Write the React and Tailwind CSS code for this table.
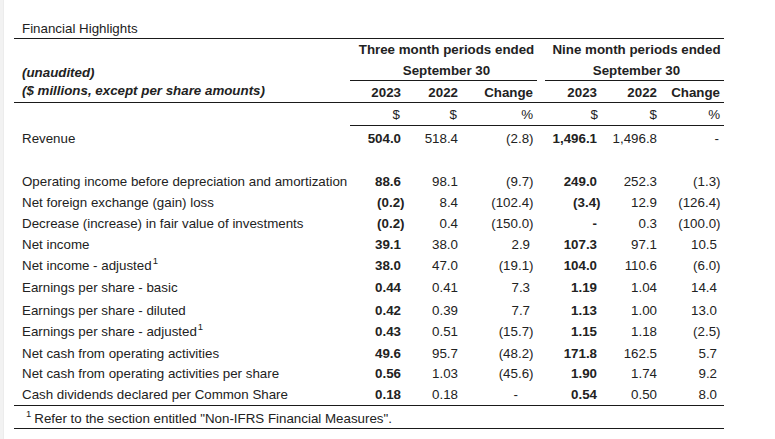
import React from "react";

const COLS = "grid grid-cols-[336px_55px_57px_75px_8px_56px_60px_63px]";
const POS_PR = ["pr-[4px]", "pr-[4px]", "pr-[7px]", "pr-[4px]", "pr-[4px]", "pr-[7px]"];
const NEG_PR = ["pr-[0.5px]", "pr-[0.5px]", "pr-[3.5px]", "pr-[0.5px]", "pr-[0.5px]", "pr-[3.5px]"];
const DASH_PR = ["pr-[5px]", "pr-[5px]", "pr-[19px]", "pr-[4px]", "pr-[5px]", "pr-[5px]"];

const rows = [
  { label: "Operating income before depreciation and amortization", v: ["88.6", "98.1", "(9.7)", "249.0", "252.3", "(1.3)"], h: "h-[21px]" },
  { label: "Net foreign exchange (gain) loss", v: ["(0.2)", "8.4", "(102.4)", "(3.4)", "12.9", "(126.4)"], h: "h-[21px]" },
  { label: "Decrease (increase) in fair value of investments", v: ["(0.2)", "0.4", "(150.0)", "-", "0.3", "(100.0)"], h: "h-[21px]" },
  { label: "Net income", v: ["39.1", "38.0", "2.9", "107.3", "97.1", "10.5"], h: "h-[21px]" },
  { label: "Net income - adjusted", sup: true, v: ["38.0", "47.0", "(19.1)", "104.0", "110.6", "(6.0)"], h: "h-[22px]" },
  { label: "Earnings per share - basic", v: ["0.44", "0.41", "7.3", "1.19", "1.04", "14.4"], h: "h-[22px]" },
  { label: "Earnings per share - diluted", v: ["0.42", "0.39", "7.7", "1.13", "1.00", "13.0"], h: "h-[22px]", pt: "pt-[1px]" },
  { label: "Earnings per share - adjusted", sup: true, v: ["0.43", "0.51", "(15.7)", "1.15", "1.18", "(2.5)"], h: "h-[21px]", pt: "pt-[1px]" },
  { label: "Net cash from operating activities", v: ["49.6", "95.7", "(48.2)", "171.8", "162.5", "5.7"], h: "h-[21px]", pt: "pt-[2px]" },
  { label: "Net cash from operating activities per share", v: ["0.56", "1.03", "(45.6)", "1.90", "1.74", "9.2"], h: "h-[21px]", pt: "pt-[1px]" },
  { label: "Cash dividends declared per Common Share", v: ["0.18", "0.18", "-", "0.54", "0.50", "8.0"], h: "h-[22px]", last: true },
];

function Cell({ value, idx, pt }) {
  const bold = idx === 0 || idx === 3;
  let pr = POS_PR[idx];
  if (value.startsWith("(")) pr = NEG_PR[idx];
  if (value === "-") pr = DASH_PR[idx];
  return (
    <div className={`flex items-center justify-end ${pr} ${pt || ""} ${bold ? "font-bold" : ""}`}>
      {value}
    </div>
  );
}

function DataRow({ label, sup, v, h, last, pt }) {
  return (
    <div className={`${COLS} ${h} ${last ? "border-b border-[#1a1a1a]" : ""}`}>
      <div className={`flex items-center pl-2 ${pt || ""}`}>
        {label}
        {sup && <sup className="text-[9.5px] ml-[1px]">1</sup>}
      </div>
      <Cell value={v[0]} idx={0} pt={pt} />
      <Cell value={v[1]} idx={1} pt={pt} />
      <Cell value={v[2]} idx={2} pt={pt} />
      <div />
      <Cell value={v[3]} idx={3} pt={pt} />
      <Cell value={v[4]} idx={4} pt={pt} />
      <Cell value={v[5]} idx={5} pt={pt} />
    </div>
  );
}

export default function App() {
  return (
    <div
      className="w-[775px] h-[439px] bg-white flex text-[#222] text-[13.33px] leading-[16px]"
      style={{ fontFamily: '"Liberation Sans", Arial, sans-serif' }}
    >
      <div className="w-[4px] h-full bg-[#f2f2f2] border-r border-[#ececec]" />
      <div className="ml-[10px] pt-[20px] w-[710px]">
        {/* Title */}
        <div className="h-[19px] border-b border-[#1a1a1a] pl-2 flex items-center">
          Financial Highlights
        </div>

        {/* Header block */}
        <div className="grid grid-cols-[336px_187px_8px_179px]">
          <div className="row-span-3 flex flex-col justify-end pl-2 pb-[2px] font-bold italic leading-[18px] border-b border-[#1a1a1a]">
            <div>(unaudited)</div>
            <div>($ millions, except per share amounts)</div>
          </div>
          <div className="h-[21px] flex items-center justify-center font-bold pl-[6px] pt-[1px]">
            Three month periods ended
          </div>
          <div />
          <div className="h-[21px] flex items-center justify-center font-bold pl-[4px] pt-[1px]">
            Nine month periods ended
          </div>
          <div className="h-[21px] flex items-center justify-center font-bold border-b border-[#1a1a1a] pl-[6px] pt-[1px]">
            September 30
          </div>
          <div />
          <div className="h-[21px] flex items-center justify-center font-bold border-b border-[#1a1a1a] pl-[4px] pt-[1px]">
            September 30
          </div>
          <div className="col-span-3 grid grid-cols-[55px_57px_75px_8px_56px_60px_63px] h-[22px] font-bold border-b border-[#1a1a1a]">
            <div className="flex items-end justify-end pr-[4px] pb-[1px]">2023</div>
            <div className="flex items-end justify-end pr-[4px] pb-[1px]">2022</div>
            <div className="flex items-end justify-end pr-[4px] pb-[1px]">Change</div>
            <div />
            <div className="flex items-end justify-end pr-[4px] pb-[1px]">2023</div>
            <div className="flex items-end justify-end pr-[4px] pb-[1px]">2022</div>
            <div className="flex items-end justify-end pr-[4px] pb-[1px]">Change</div>
          </div>
        </div>

        {/* Units row */}
        <div className={`${COLS} h-[23px]`}>
          <div />
          <div className="col-span-7 grid grid-cols-[55px_57px_75px_8px_56px_60px_63px] border-b border-[#1a1a1a]">
            <div className="flex items-center justify-end pr-[5px] pt-[2px]">$</div>
            <div className="flex items-center justify-end pr-[5px] pt-[2px]">$</div>
            <div className="flex items-center justify-end pr-[4px] pt-[2px]">%</div>
            <div />
            <div className="flex items-center justify-end pr-[3px] pt-[2px]">$</div>
            <div className="flex items-center justify-end pr-[4px] pt-[2px]">$</div>
            <div className="flex items-center justify-end pr-[4px] pt-[2px]">%</div>
          </div>
        </div>

        {/* Revenue */}
        <DataRow label="Revenue" v={["504.0", "518.4", "(2.8)", "1,496.1", "1,496.8", "-"]} h="h-[23px]" pt="pt-[2px]" />
        <div className="h-[22px]" />

        {rows.map((r) => (
          <DataRow key={r.label} {...r} />
        ))}

        {/* Footnote */}
        <div className="h-[23px] border-b border-[#1a1a1a] flex items-center pl-[12px] pt-[4px]">
          <sup className="text-[9.5px] mr-[3px]">1</sup>
          Refer to the section entitled "Non-IFRS Financial Measures".
        </div>
      </div>
    </div>
  );
}
